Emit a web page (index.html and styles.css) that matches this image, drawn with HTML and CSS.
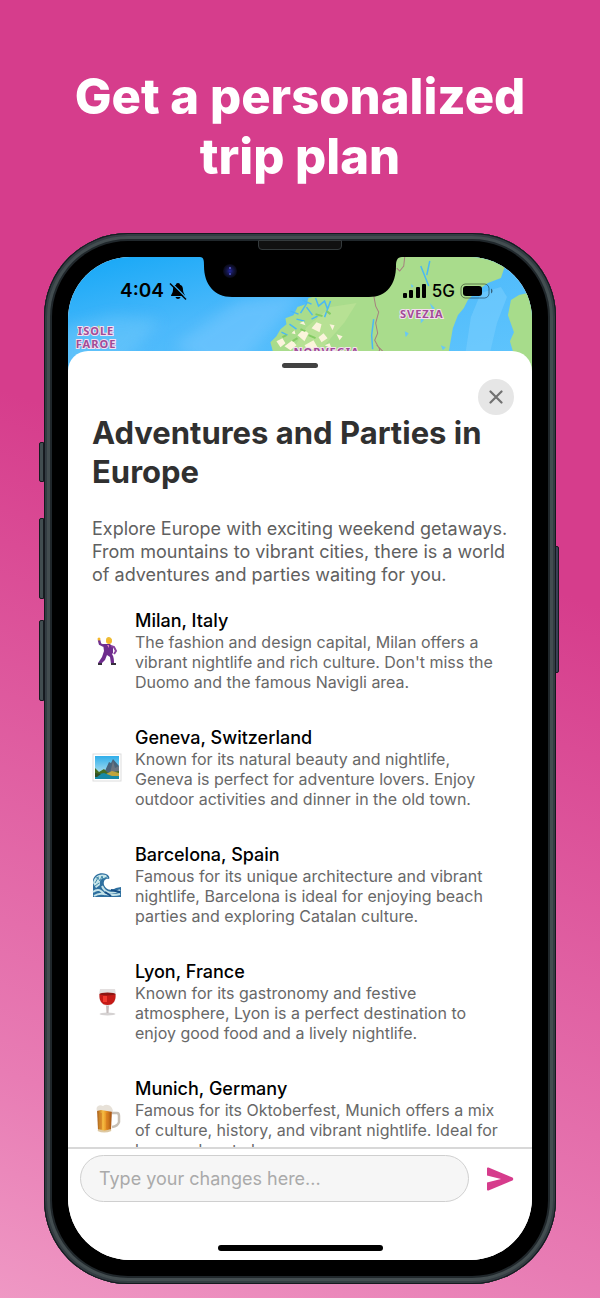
FILE: index.html
```html
<!DOCTYPE html>
<html lang="en">
<head>
<meta charset="utf-8">
<meta name="viewport" content="width=device-width, initial-scale=1">
<title>Get a personalized trip plan</title>
<link rel="stylesheet" href="styles.css">
</head>
<body>
<main class="stage">
  <h1 class="headline">Get a personalized<br>trip plan</h1>
  <div class="phone">
    <span class="key key-mute"></span>
    <span class="key key-up"></span>
    <span class="key key-down"></span>
    <span class="key key-power"></span>
    <span class="speaker"></span>
    <div class="screen">
      <svg class="map" viewBox="0 0 463 120" preserveAspectRatio="xMidYMin slice" aria-hidden="true">
        <defs>
          <linearGradient id="sea" x1="0" y1="0" x2="1" y2="1"><stop offset="0" stop-color="#14a7f6"/><stop offset=".4" stop-color="#4cb9fb"/><stop offset="1" stop-color="#62c6fd"/></linearGradient>
          <filter id="soft" x="-30%" y="-50%" width="160%" height="200%"><feGaussianBlur stdDeviation="7"/></filter>
          <filter id="edge"><feGaussianBlur stdDeviation="0.6"/></filter>
        </defs>
        <rect width="463" height="120" fill="url(#sea)"/>
        <path d="M-10 72L45 58 92 62 70 90 40 120-10 120Z" fill="#79ccfb" opacity=".4" filter="url(#soft)"/>
        <path d="M105 88L170 45 235 36 205 70 160 120Z" fill="#82cbff" opacity=".45" filter="url(#soft)"/>
        <g filter="url(#edge)">
        <path d="M206 100L202 85 208 79 212 72 218 67 217 61 225 58 229 50 238 47 240 41 252 38 300 30 318 0H440L435 12 432 21 419 26 408 34 399 43 395 51 389 58 384 71 380 94V120H210Z" fill="#a9dc8c"/>
        <path d="M463 35L450 38 442 43 439 58 445 75 441 84 444 94V120H463Z" fill="#a7dc8b"/>
        <path d="M412 36L432 30 438 40 428 66 420 100H396L402 60Z" fill="#7dcffd" opacity=".5"/>
        <path d="M222 96L238 70 262 50 288 46 276 65 250 95Z" fill="#c6e59c" opacity=".5"/>
        <path d="M238 50l6 8M228 62l8 2M247 41l3 8 6-5 3 8M234 43l9 4 M239 45l-7 11M262 44l-6 16M213 75l6 3M221 67l7 5M243 62l6-3M305 62L303 78 304 92M352 9l8 20M361 4l-3 14M222 54l8 3" fill="none" stroke="#49b8f5" stroke-width="1.500"/>
        <path d="M208 84l6-3 3 5-5 4ZM216 89l8-6 4 5-6 5ZM229 78l6-6 5 4-4 8ZM236 88l9-5 4 7-9 4ZM243 71l5-6 5 2-2 8ZM231 66l4-2 2 4ZM250 80l5-4 4 5-6 4ZM261 67l5 1-2 5ZM268 77l6 2-3 4ZM223 76l3-3 1 4ZM256 88l5-2 2 5Z" fill="#fbf4dc"/>
        <path d="M224 84l5-3M232 72l5 2M240 78l7 3M214 80l4-2M247 57l7 2M258 54l4 3" stroke="#84cc64" stroke-width="2"/>
        <path d="M361 46l5 5-2 3ZM352 59l3 4-3 3ZM336 74l4 2-3 4ZM372 88l5 2-3 3ZM342 27l3 2-2 2Z" fill="#67c8f6"/>
        </g>
        <path d="M336 0L335 9 331 14 328 11M305 38L307 49 310 55 307 66 309 76 306 83 311 92 307 107M308 88L314 94" fill="none" stroke="#a6807e"/>
        <path d="M30 68l6 3-2 5-5-3ZM34 96l5 1-2 5Z" fill="#a9dc8c"/>
        <g class="place">
          <text x="28" y="78">ISOLE</text>
          <text x="28" y="91">FAROE</text>
          <text x="353" y="61">SVEZIA</text>
          <text x="258" y="99">NORVEGIA</text>
        </g>
      </svg>
      <svg class="notch" viewBox="0 0 202 40" aria-hidden="true">
        <defs><radialGradient id="lens"><stop offset="0" stop-color="#2327a0"/><stop offset=".45" stop-color="#15174d"/><stop offset="1" stop-color="#080812"/></radialGradient></defs>
        <path d="M0 0C4 0 4 4 4 9C4 27 14 40 32 40H169C187 40 196 27 196 9C196 4 197 0 202 0Z" fill="#000"/>
        <circle cx="30" cy="14" r="7" fill="url(#lens)"/><circle cx="30" cy="11" r="1" fill="#5b5bd0"/><circle cx="30" cy="17" r="1" fill="#4d53cc"/>
      </svg>
      <div class="status">
        <div class="status-side">
          <span class="clock">4:04</span>
          <svg width="18" height="18" viewBox="0 0 18 18" aria-hidden="true"><path d="M9 1C10.500 1 11 2 11 2.800C13.500 3.600 14 5.500 14 8C14 11 16 12 16 14H2C2 12 4 11 4 8C4 5.500 4.500 3.600 7 2.800C7 2 7.500 1 9 1ZM6.500 15H11.500C11 17.500 7 17.500 6.500 15Z" fill="#000"/><path d="M2 0.500L18 16.500" stroke="#38b1f9" stroke-width="1.300"/><path d="M1 1.500L17 17.500" stroke="#000" stroke-width="1.400"/></svg>
        </div>
        <div class="status-side">
          <svg width="24" height="16" viewBox="0 0 24 16" aria-hidden="true"><rect x="0" y="10" width="4" height="5" rx="1"/><rect x="6" y="7" width="4" height="8" rx="1"/><rect x="13" y="4" width="4" height="11" rx="1"/><rect x="19" y="1" width="4" height="14" rx="1"/></svg>
          <span class="network">5G</span>
          <svg width="34" height="16" viewBox="0 0 34 16" aria-hidden="true"><rect x="1" y="1" width="28" height="14" rx="4.500" fill="none" stroke="#000" stroke-opacity=".45"/><rect x="3" y="3" width="19" height="10" rx="3"/><path d="M31 5.500C33 6.500 33 9.500 31 10.500Z" fill-opacity=".5"/></svg>
        </div>
      </div>
      <section class="sheet">
        <span class="grabber"></span>
        <button class="close" type="button" aria-label="Close"><svg width="14" height="14" viewBox="0 0 14 14" aria-hidden="true"><path d="M1.500 1.500L12.500 12.500M12.500 1.500L1.500 12.500" stroke="#717171" stroke-width="2.200" stroke-linecap="round"/></svg></button>
        <div class="content">
          <h2 class="title">Adventures and Parties in Europe</h2>
          <p class="intro">Explore Europe with exciting weekend getaways. From mountains to vibrant cities, there is a world of adventures and parties waiting for you.</p>
          <ul class="stops">
            <li class="stop">
              <svg class="emoji" viewBox="0 0 30 30" aria-hidden="true"><path d="M12 10L8 8 7 4" fill="none" stroke="#70308f" stroke-width="2.500" stroke-linejoin="round"/><path d="M11 8L18 8 21 11 21 17 20 18C22 21 22 24 22 28L19 28 18 21 15 19 13 24 9 28 6 27 10 21 12 15Z" fill="#6e2c8d"/><path d="M19 10L22 11 24 15 22 18" fill="none" stroke="#88419e" stroke-width="2"/><path d="M15 9L17 12 17 9Z" fill="#df82bd"/><circle cx="17" cy="5" r="3" fill="#f5b62a"/><path d="M14 4C14 0 20 0 20 5L17 3Z" fill="#edbd35"/><circle cx="7" cy="3" r="1.500" fill="#f5b62a"/><path d="M6 28h4M19 28h5" stroke="#36303c" stroke-width="2"/></svg>
              <div><h3 class="name">Milan, Italy</h3><p class="about">The fashion and design capital, Milan offers a vibrant nightlife and rich culture. Don't miss the Duomo and the famous Navigli area.</p></div>
            </li>
            <li class="stop">
              <svg class="emoji" viewBox="0 0 30 30" aria-hidden="true"><defs><linearGradient id="sky" x1="0" y1="0" x2="0" y2="1"><stop offset="0" stop-color="#2faeea"/><stop offset="1" stop-color="#d3eff1"/></linearGradient></defs><rect x="1" y="1" width="28" height="27" fill="#fff" stroke="#ddd"/><rect x="3" y="3" width="24" height="23" fill="url(#sky)"/><path d="M12 20L17 9 19 10 21 6 27 13V21Z" fill="#49637a"/><path d="M18 20L21 8 23 15 27 13V21Z" fill="#6b7480"/><path d="M3 15L7 19 12 16 16 20 27 18V23H3Z" fill="#456b20"/><path d="M14 21L20 18 27 20V24H14Z" fill="#c0a43d"/><path d="M3 22L12 20 20 23 27 23V26H3Z" fill="#1789a6"/><path d="M3 20L9 21 5 24H3Z" fill="#314e23"/></svg>
              <div><h3 class="name">Geneva, Switzerland</h3><p class="about">Known for its natural beauty and nightlife, Geneva is perfect for adventure lovers. Enjoy outdoor activities and dinner in the old town.</p></div>
            </li>
            <li class="stop">
              <svg class="emoji" viewBox="0 0 30 30" aria-hidden="true"><path d="M1 27V10C2 5 8 2 14 4C17 5 18 8 17 9C14 8 11 10 12 15C14 20 19 21 24 18L29 17V27Z" fill="#2e6f9f"/><path d="M1 13C2 6 8 3 14 5L16 8C10 7 7 10 8 15L4 18Z" fill="#c6e5e9"/><path d="M3 13L6 8 8 11 10 6 11 9 15 7M3 16L7 13M4 8L7 7" stroke="#4289aa" fill="none"/><path d="M1 22C6 18 9 20 13 25M10 16C13 23 20 25 28 20M2 26C12 20 16 28 28 24" fill="none" stroke="#c3e2e8" stroke-width="2"/><path d="M13 22L19 26M19 20L28 22" stroke="#174f86" stroke-width="2"/></svg>
              <div><h3 class="name">Barcelona, Spain</h3><p class="about">Famous for its unique architecture and vibrant nightlife, Barcelona is ideal for enjoying beach parties and exploring Catalan culture.</p></div>
            </li>
            <li class="stop">
              <svg class="emoji" viewBox="0 0 30 30" aria-hidden="true"><ellipse cx="15.500" cy="27" rx="8" ry="1.500" fill="#d5d2d2"/><path d="M14 18H17L16.500 26H14.500Z" fill="#c5bcbc"/><path d="M8 2H23C25 10 24 18 15.500 19C7 18 6 10 8 2Z" fill="#e3dfdf"/><path d="M7.500 7H23.500C24 13 22 18 15.500 18C9 18 7 13 7.500 7Z" fill="#c51a16"/><ellipse cx="15.500" cy="7" rx="8" ry="1.500" fill="#8d1512"/><path d="M13 9V15" stroke="#f0382e" stroke-width="4"/></svg>
              <div><h3 class="name">Lyon, France</h3><p class="about">Known for its gastronomy and festive atmosphere, Lyon is a perfect destination to enjoy good food and a lively nightlife.</p></div>
            </li>
            <li class="stop">
              <svg class="emoji" viewBox="0 0 30 30" aria-hidden="true"><defs><linearGradient id="beer"><stop offset="0" stop-color="#a75a17"/><stop offset=".4" stop-color="#f7bd42"/><stop offset=".65" stop-color="#e38c20"/><stop offset="1" stop-color="#9e4c12"/></linearGradient></defs><path d="M20 9H25Q27 9 27 12V18Q26 22 20 23" fill="none" stroke="#c7bfb5" stroke-width="2.500"/><path d="M5 5H20L19 26Q12 29 6 26Z" fill="url(#beer)"/><path d="M9 9V25M15 9V25" stroke="#d17720"/><path d="M5 7C3 2 8 0 11 2C15-1 21 2 21 8L15 7 9 6Z" fill="#e7e1d8"/><path d="M6 26Q12 29 19 26" fill="none" stroke="#ddc8a2" stroke-width="2"/></svg>
              <div><h3 class="name">Munich, Germany</h3><p class="about">Famous for its Oktoberfest, Munich offers a mix of culture, history, and vibrant nightlife. Ideal for beer and party lovers.</p></div>
            </li>
          </ul>
        </div>
        <form class="composer">
          <input class="field" type="text" aria-label="Your changes" placeholder="Type your changes here...">
          <button class="send" type="button" aria-label="Send"><svg width="28" height="24" viewBox="0 0 28 24" aria-hidden="true"><path d="M1 1.500Q1 0 2.500 0.600L26.500 10.500Q28 12 26.500 13.500L2.500 23.400Q1 24 1 22.500V15.500L15 12 1 8.500Z" fill="#d63c8c"/></svg></button>
        </form>
        <span class="home"></span>
      </section>
    </div>
  </div>
</main>
</body>
</html>
```
FILE: styles.css
```css
* { box-sizing: border-box; }
body, h1, h2, h3, p, ul { margin: 0; padding: 0; }
body { font-family: Inter, "Liberation Sans", sans-serif; }
.stage {
  display: flex;
  flex-direction: column;
  height: 100vh;
  min-height: 900px;
  padding: 67px 44px 14px;
  background: linear-gradient(200deg, #d63d8c 0%, #d63d8c 40%, #e87cb4 85%, #ef98c4 100%);
}
.headline {
  margin: 0 -20px 46px;
  color: #fff;
  font-size: 49px;
  font-weight: 800;
  line-height: 60px;
  text-align: center;
}
.phone {
  position: relative;
  display: flex;
  flex: 1;
  min-height: 0;
  padding: 24px;
  border-radius: 84px;
  background: #000;
  box-shadow: inset 0 0 0 1px #15191f, inset 0 0 0 3px #333c42, inset 0 0 0 6px #434d50, inset 0 0 0 8px #20272b;
}
.key {
  position: absolute;
  left: -5px;
  width: 5px;
  border: 1px solid #171b20;
  border-radius: 2px 0 0 2px;
  background: #414d50;
}
.key-mute { top: 209px; height: 40px; }
.key-up { top: 285px; height: 81px; }
.key-down { top: 387px; height: 81px; }
.key-power { top: 313px; right: -3px; left: auto; width: 4px; height: 127px; border-radius: 0 2px 2px 0; background: #3b4055; }
.speaker {
  position: absolute;
  top: 7px;
  left: 50%;
  width: 84px;
  height: 10px;
  margin-left: -42px;
  border: 1px solid #343a3c;
  border-radius: 0 0 4px 4px;
  background: #111;
}
.screen {
  position: relative;
  display: flex;
  flex: 1;
  flex-direction: column;
  min-width: 0;
  overflow: hidden;
  border-radius: 62px;
  background: #fff;
}
.map { position: absolute; top: 0; left: 0; width: 100%; height: 120px; }
.place {
  fill: #a04b96;
  stroke: #f4dff0;
  stroke-width: 2px;
  paint-order: stroke;
  font-family: "Noto Sans", sans-serif;
  font-size: 11px;
  font-weight: 700;
  letter-spacing: 1px;
  text-anchor: middle;
}
.notch { position: absolute; top: 0; left: 50%; width: 202px; height: 40px; margin-left: -100px; }
.status {
  position: relative;
  display: flex;
  justify-content: space-between;
  height: 94px;
  padding: 20px 38px 0 52px;
}
.status-side { display: flex; align-items: center; gap: 5px; height: 28px; }
.clock { font-size: 19px; font-weight: 600; line-height: 28px; }
.network { font-size: 17px; font-weight: 500; line-height: 28px; }
.sheet {
  position: relative;
  display: flex;
  flex: 1;
  flex-direction: column;
  min-height: 0;
  padding-top: 12px;
  border-radius: 20px 20px 0 0;
  background: #fff;
}
.grabber { flex: none; align-self: center; width: 36px; height: 5px; border-radius: 3px; background: #424242; }
.close {
  position: absolute;
  top: 28px;
  right: 18px;
  display: grid;
  place-items: center;
  width: 36px;
  height: 36px;
  padding: 0;
  border: 0;
  border-radius: 50%;
  background: #e6e6e6;
}
.content { flex: 1; min-height: 0; padding: 45px 24px 0; overflow: hidden; }
.title { color: #303030; font-size: 31px; font-weight: 700; line-height: 39px; }
.intro { margin-top: 26px; color: #606060; font-size: 18px; line-height: 23px; }
.stops { display: flex; flex-direction: column; gap: 35px; margin-top: 24px; list-style: none; }
.stop { display: grid; grid-template-columns: 30px 1fr; align-items: center; gap: 13px; }
.emoji { width: 30px; height: 30px; }
.name { color: #000; font-size: 18px; font-weight: 500; line-height: 22px; }
.about { color: #686868; font-size: 16px; line-height: 20px; }
.stop:last-child .emoji { align-self: start; margin-top: 26px; }
.composer {
  display: flex;
  align-items: center;
  gap: 16px;
  padding: 6px 17px 6px 12px;
  border-top: 2px solid #d8d8d8;
}
.field {
  flex: 1;
  min-width: 0;
  height: 47px;
  padding: 0 18px;
  border: 1px solid #cfcfcf;
  border-radius: 24px;
  outline: 0;
  background: #f6f6f6;
  font: 18px/24px Inter, "Liberation Sans", sans-serif;
}
.field::placeholder { color: #aaa; opacity: 1; }
.send { display: grid; place-items: center; width: 30px; height: 40px; padding: 0; border: 0; background: none; }
.home { flex: none; align-self: center; width: 165px; height: 6px; margin: 37px 0 9px; border-radius: 3px; background: #000; }
```
